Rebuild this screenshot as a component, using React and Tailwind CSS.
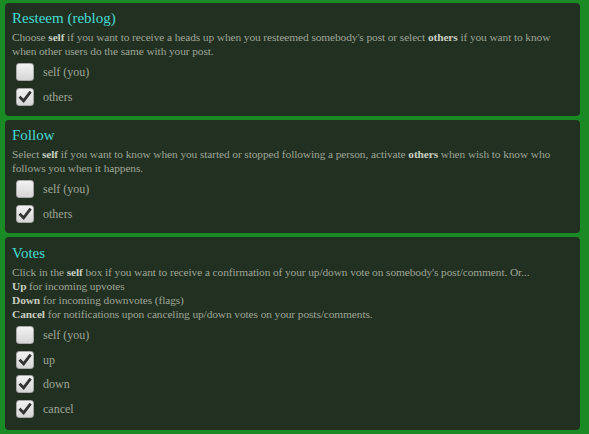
import React from "react";

const Check = ({ checked }) => (
  <div className="w-[18px] h-[18px] rounded-[3px] border border-[#a8a8a8] bg-gradient-to-b from-[#f2f2f2] to-[#d6d6d6] flex items-center justify-center shrink-0">
    {checked && (
      <svg width="14" height="14" viewBox="0 0 14 14">
        <path d="M2.5 7.8 L5.6 10.8 L11.8 2.8" fill="none" stroke="#333" strokeWidth="2.8" strokeLinecap="square" strokeLinejoin="miter" />
      </svg>
    )}
  </div>
);

const Row = ({ checked, label }) => (
  <div className="flex items-center h-[24.5px]">
    <div className="w-[31px] pl-[4px] flex"><Check checked={checked} /></div>
    <span className="text-[12px] text-[#9ea596]">{label}</span>
  </div>
);

const Panel = ({ title, children, rows, h, pt }) => (
  <div className={`bg-[#223022] rounded-[4px] px-[7px] ${pt} ${h}`}>
    <div className="text-[15px] leading-[18px] text-[#45dcd4]">{title}</div>
    <div className="text-[11.4px] leading-[14px] tracking-[-0.1px] text-[#9ea596] mt-[3px]">{children}</div>
    <div className="mt-[2px]">
      {rows.map((r, i) => (
        <Row key={i} checked={r[1]} label={r[0]} />
      ))}
    </div>
  </div>
);

const B = ({ children }) => <b className="text-[#c8cec0] font-bold">{children}</b>;

export default function App() {
  return (
    <div className="w-[589px] h-[434px] bg-[#1a8b24] pl-[5px] pr-[9px] pt-[3px] flex flex-col gap-[4px] font-['Liberation_Serif',serif]">
      <Panel
        title="Resteem (reblog)"
        h="h-[113px]"
        pt="pt-[6px]"
        rows={[["self (you)", false], ["others", true]]}
      >
        Choose <B>self</B> if you want to receive a heads up when you resteemed somebody's post or select <B>others</B> if you want to know when other users do the same with your post.
      </Panel>
      <Panel
        title="Follow"
        h="h-[113px]"
        pt="pt-[6px]"
        rows={[["self (you)", false], ["others", true]]}
      >
        Select <B>self</B> if you want to know when you started or stopped following a person, activate <B>others</B> when wish to know who follows you when it happens.
      </Panel>
      <Panel
        title="Votes"
        h="h-[193px]"
        pt="pt-[7px]"
        rows={[["self (you)", false], ["up", true], ["down", true], ["cancel", true]]}
      >
        Click in the <B>self</B> box if you want to receive a confirmation of your up/down vote on somebody's post/comment. Or...
        <br />
        <B>Up</B> for incoming upvotes
        <br />
        <B>Down</B> for incoming downvotes (flags)
        <br />
        <B>Cancel</B> for notifications upon canceling up/down votes on your posts/comments.
      </Panel>
    </div>
  );
}
